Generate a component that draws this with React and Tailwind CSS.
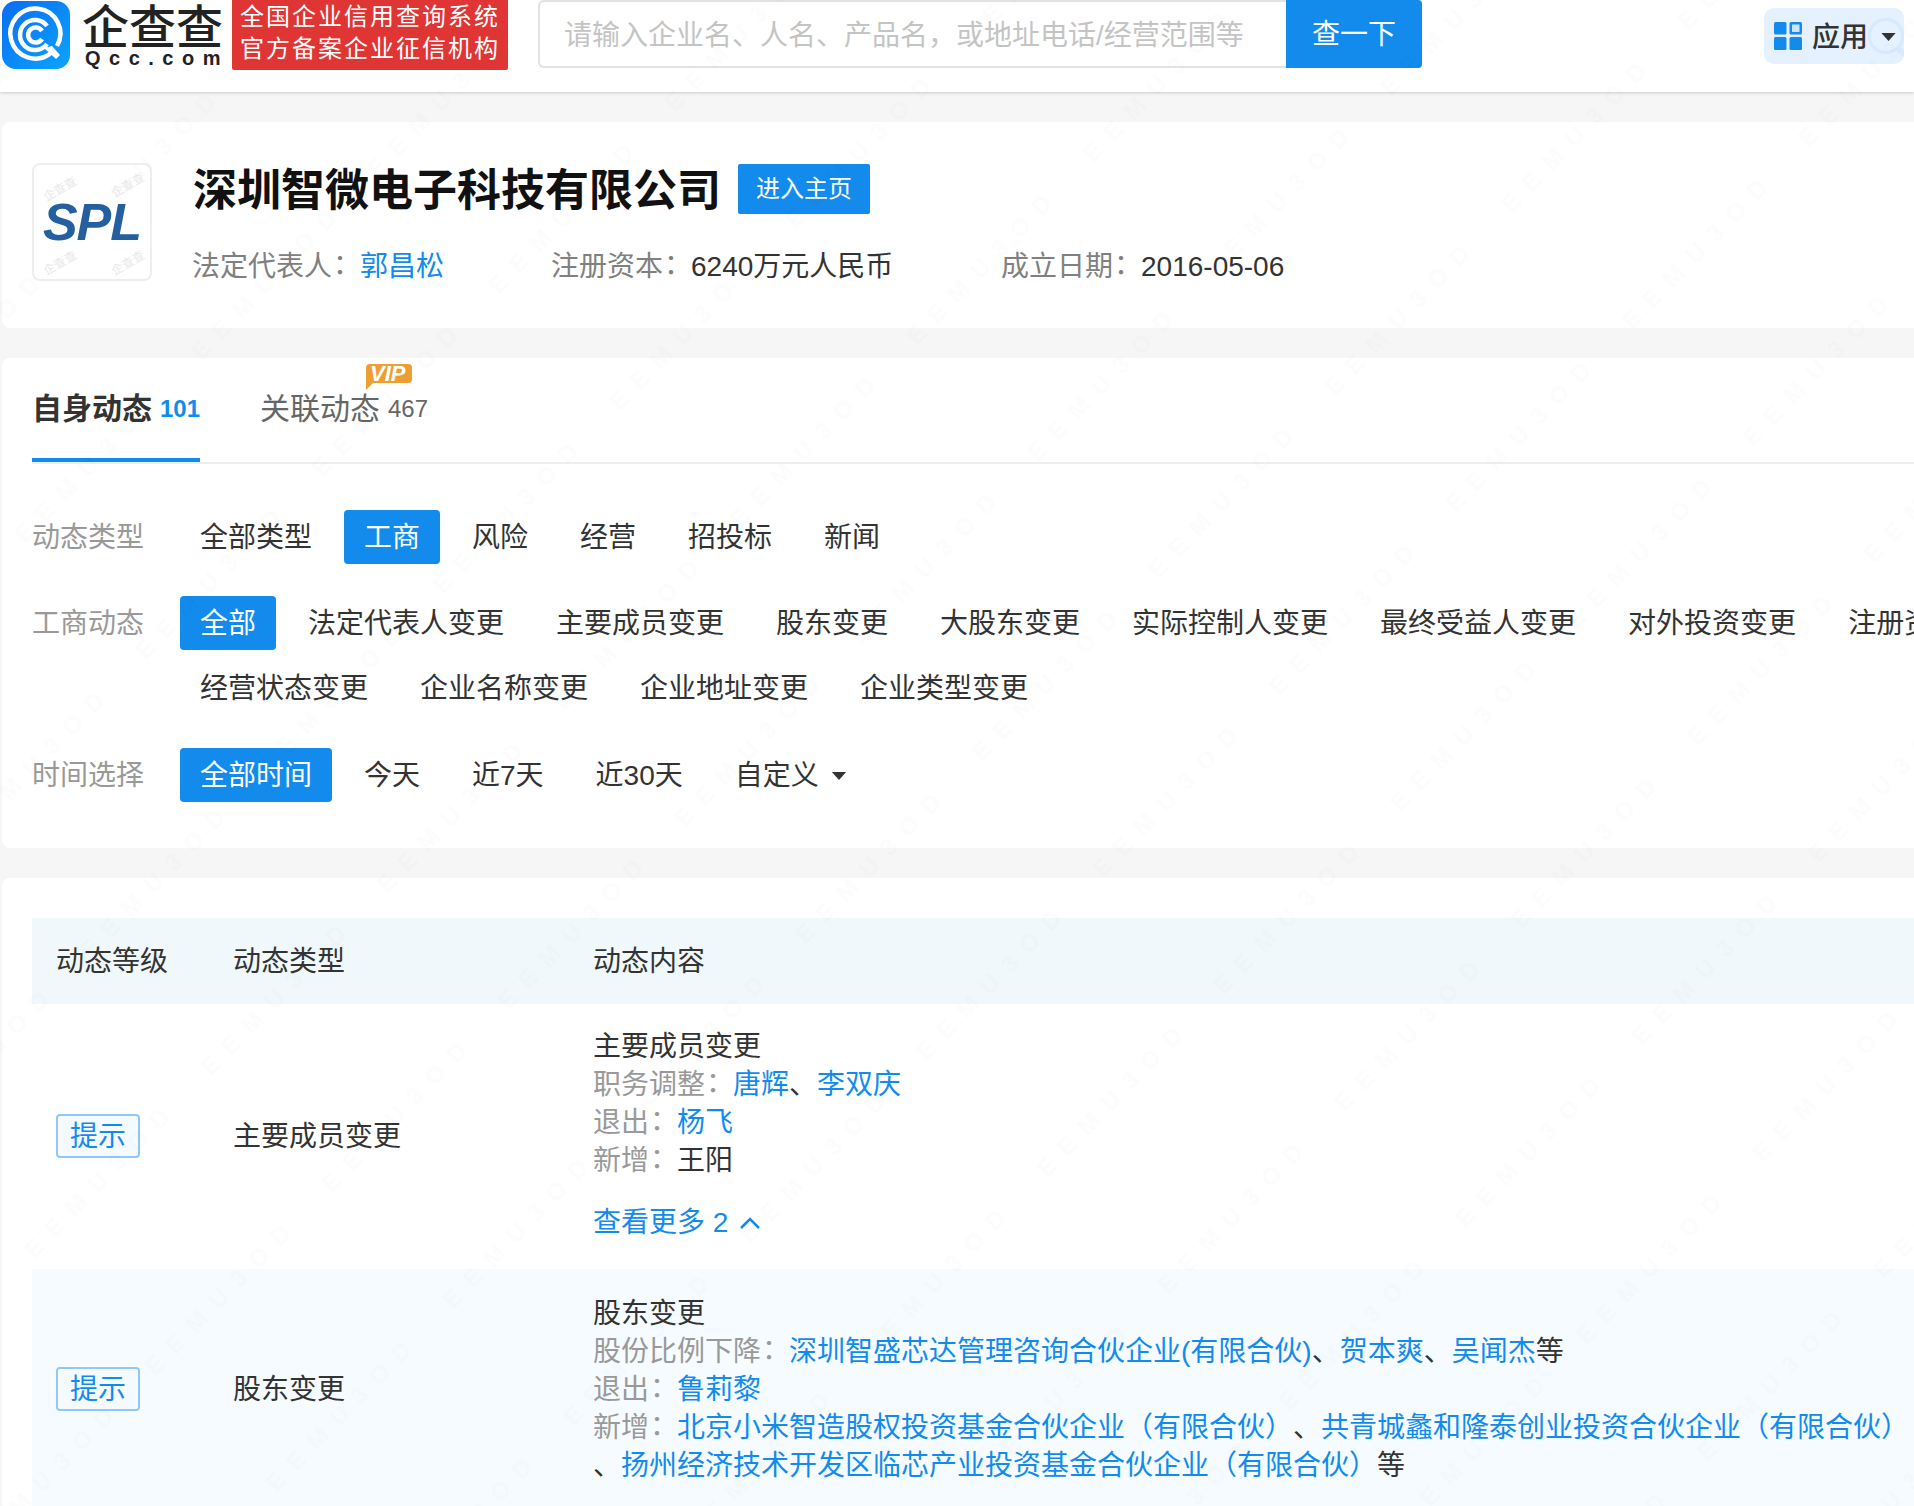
const typeTabs = ["全部类型", "工商", "风险", "经营", "招投标", "新闻"]
const bizTabs = [
  "全部",
  "法定代表人变更",
  "主要成员变更",
  "股东变更",
  "大股东变更",
  "实际控制人变更",
  "最终受益人变更",
  "对外投资变更",
  "注册资本变更",
  "经营状态变更",
  "企业名称变更",
  "企业地址变更",
  "企业类型变更",
]
const timeTabs = ["全部时间", "今天", "近7天", "近30天"]

function Caret({ className }) {
  return (
    <svg viewBox="0 0 16 9" className={className}>
      <path d="M0 0h16L8 9z" fill="currentColor" />
    </svg>
  )
}

function Chip({ active, children }) {
  return (
    <div
      className={`h-[54px] px-5 mr-3 rounded-[4px] leading-[56px] whitespace-nowrap ${
        active ? "bg-[#128bed] text-white" : "text-[#333]"
      }`}
    >
      {children}
    </div>
  )
}

function FilterRow({ label, children }) {
  return (
    <div className="flex">
      <div className="w-[148px] h-[54px] shrink-0 leading-[56px] text-[#999]">{label}</div>
      <div className="flex flex-wrap w-[1880px] gap-y-[11px]">{children}</div>
    </div>
  )
}

function Badge() {
  return (
    <div className="w-[84px] h-[44px] -mt-[2px] border-2 border-[#8fc9fb] rounded-[4px] bg-[#f5faff] text-[#128bed] text-center leading-[42px]">
      提示
    </div>
  )
}

function A({ children }) {
  return <span className="text-[#128bed]">{children}</span>
}

function G({ children }) {
  return <span className="text-[#999]">{children}</span>
}

// 冒号居中显示
function Colon() {
  return <span className="relative -left-[6px] leading-[0] [font-family:'Noto_Sans_CJK_TC',sans-serif]">：</span>
}

function QccLogo() {
  return (
    <svg viewBox="0 0 68 68" className="w-[68px] h-[68px] shrink-0 mt-px ml-[2px]">
      <defs>
        <linearGradient id="qcc" x1="0" y1="0" x2="1" y2="1">
          <stop offset="0" stopColor="#0a6cf5" />
          <stop offset="1" stopColor="#0aa5ff" />
        </linearGradient>
      </defs>
      <rect width="68" height="68" rx="14" fill="url(#qcc)" />
      <path d="M49 52A25 25 0 1 1 55 45" fill="none" stroke="#fff" strokeWidth="4.5" />
      <path d="M45 43A15 15 0 1 1 45 25" fill="none" stroke="#fff" strokeWidth="4.5" />
      <path d="M40 30A7.5 7.5 0 1 0 40 38" fill="none" stroke="#fff" strokeWidth="4.5" />
      <path d="M42 47l12 11 4-4-8-9z" fill="#fff" />
    </svg>
  )
}

function SplLogo() {
  return (
    <div className="relative w-[120px] h-[118px] shrink-0 border-2 border-[#eee] rounded-lg bg-white overflow-hidden flex items-center justify-center">
      <span className="[font-family:'Liberation_Sans',sans-serif] italic font-bold text-[52px] leading-none tracking-[-1px] text-[#24609f]">
        SPL
      </span>
      <span className="absolute left-2 top-4 -rotate-[30deg] text-[12px] leading-4 text-[#e8e8e8]">企查查</span>
      <span className="absolute right-1 top-3 -rotate-[30deg] text-[12px] leading-4 text-[#e8e8e8]">企查查</span>
      <span className="absolute left-2 bottom-2 -rotate-[30deg] text-[12px] leading-4 text-[#e8e8e8]">企查查</span>
      <span className="absolute right-1 bottom-2 -rotate-[30deg] text-[12px] leading-4 text-[#e8e8e8]">企查查</span>
    </div>
  )
}

// 页面水印
function Watermark() {
  return (
    <svg className="absolute inset-0 w-full h-full pointer-events-none">
      <defs>
        <pattern
          id="wm"
          patternUnits="userSpaceOnUse"
          width="254"
          height="168"
          patternTransform="translate(1041 1172) rotate(-46) translate(0 -21)"
        >
          <text x="0" y="30" fill="#000" fillOpacity="0.01" className="font-bold text-[24px] tracking-[13px]">
            EEMU3OD
          </text>
        </pattern>
      </defs>
      <rect width="100%" height="100%" fill="url(#wm)" />
    </svg>
  )
}

export default function App() {
  return (
    <div className="relative h-[1506px] overflow-hidden bg-[#f6f6f6] text-[28px] text-[#333] [font-family:'Liberation_Sans','Noto_Sans_CJK_SC',sans-serif]">
      {/* 顶部导航 */}
      <div className="flex h-[92px] bg-white shadow-[0_1px_3px_rgba(0,0,0,0.18)]">
        <QccLogo />
        <div className="w-[142px] ml-3 shrink-0 text-[#222]">
          <div className="text-[47px] leading-[40px] font-medium whitespace-nowrap mt-2">企查查</div>
          <div className="text-[20px] leading-[20px] font-bold tracking-[8.5px] whitespace-nowrap ml-[3px]">
            Qcc.com
          </div>
        </div>
        <div className="w-[276px] h-[70px] ml-2 shrink-0 bg-[#e03535] rounded-b-[2px] text-white text-[24px] leading-[32px] tracking-[2px] pl-2 pt-[1px] whitespace-nowrap">
          <div>全国企业信用查询系统</div>
          <div>官方备案企业征信机构</div>
        </div>
        <div className="flex h-[68px] ml-[30px] w-[884px] shrink-0">
          <div className="w-[748px] border-2 border-r-0 border-[#e2e2e2] rounded-l-[6px] pl-6 leading-[68px] text-[#c4c4c4] whitespace-nowrap">
            请输入企业名、人名、产品名，或地址电话/经营范围等
          </div>
          <div className="w-[136px] bg-[#128bed] rounded-r-[4px] text-white text-center leading-[70px]">查一下</div>
        </div>
        <div className="relative flex items-center w-[140px] h-[56px] mt-2 ml-[342px] shrink-0 bg-[#e6f1ff] rounded-[10px] overflow-hidden">
          <svg viewBox="0 0 60 60" className="absolute left-[102px] top-2 w-[50px] h-[50px]">
            <circle cx="24" cy="24" r="20" fill="none" stroke="#d9e9fd" strokeWidth="4" />
            <path d="M39 39l12 12" stroke="#d9e9fd" strokeWidth="7" strokeLinecap="round" />
          </svg>
          <svg viewBox="0 0 28 28" className="relative w-[28px] h-[28px] ml-[10px] shrink-0">
            <rect width="12.5" height="12.5" rx="1.5" fill="#128bed" />
            <rect x="15.5" y="0" width="12.5" height="12.5" rx="1.5" fill="#128bed" />
            <rect x="18" y="2.5" width="7.5" height="7.5" fill="#cfe3fa" />
            <rect y="15" width="12.5" height="13" rx="1.5" fill="#128bed" />
            <rect x="15.5" y="15" width="12.5" height="13" rx="1.5" fill="#128bed" />
          </svg>
          <span className="relative ml-[10px] mt-1 font-medium whitespace-nowrap">应用</span>
          <Caret className="relative w-[15px] h-[8px] ml-[13px] mt-[2px] text-[#333]" />
        </div>
      </div>

      <div className="w-[2200px] ml-[2px]">
        {/* 公司信息 */}
        <div className="flex h-[206px] mt-[30px] pl-[30px] pt-[41px] bg-white rounded-l-lg">
          <SplLogo />
          <div className="ml-[41px]">
            <div className="flex items-center h-[50px] mt-px">
              <h1 className="mt-1 text-[44px] font-bold text-[#111] whitespace-nowrap leading-[50px]">
                深圳智微电子科技有限公司
              </h1>
              <div className="w-[132px] h-[50px] ml-[17px] bg-[#128bed] rounded-[2px] text-white text-[24px] text-center leading-[49px]">
                进入主页
              </div>
            </div>
            <div className="flex mt-[33px] -ml-px leading-[40px] whitespace-nowrap">
              <div className="w-[359px]">
                <span className="text-[#808080]">
                  法定代表人
                  <Colon />
                </span>
                <A>郭昌松</A>
              </div>
              <div className="w-[450px]">
                <span className="text-[#808080]">
                  注册资本
                  <Colon />
                </span>
                6240万元人民币
              </div>
              <div>
                <span className="text-[#808080]">
                  成立日期
                  <Colon />
                </span>
                2016-05-06
              </div>
            </div>
          </div>
        </div>

        {/* 筛选 */}
        <div className="h-[490px] mt-[30px] pl-[30px] bg-white rounded-l-lg">
          <div className="relative flex h-[106px] border-b-2 border-[#eee]">
            <div className="flex w-[168px] h-[104px] border-b-4 border-[#128bed] pt-[30px] leading-[42px] whitespace-nowrap">
              <span className="text-[30px] font-bold">自身动态</span>
              <span className="ml-2 text-[24px] font-bold text-[#128bed]">101</span>
            </div>
            <div className="flex ml-[60px] pt-[30px] leading-[42px] whitespace-nowrap text-[#666]">
              <span className="text-[30px]">关联动态</span>
              <span className="ml-2 text-[24px]">467</span>
            </div>
            <div className="absolute left-[332px] top-[6px]">
              <svg viewBox="0 0 48 26" className="w-[48px] h-[26px]">
                <path
                  d="M6 0h38a4 4 0 0 1 4 4v11a4 4 0 0 1-4 4H9l-7 7V4a4 4 0 0 1 4-4z"
                  fill="#ee9f33"
                />
              </svg>
              <span className="absolute left-[6px] top-0 [font-family:'Liberation_Sans',sans-serif] italic font-bold text-[22px] leading-[19px] text-white">
                VIP
              </span>
            </div>
          </div>
          <div className="flex flex-col gap-8 pt-[46px]">
            <FilterRow label="动态类型">
              {typeTabs.map((t) => (
                <Chip key={t} active={t === "工商"}>
                  {t}
                </Chip>
              ))}
            </FilterRow>
            <FilterRow label="工商动态">
              {bizTabs.map((t, i) => (
                <Chip key={t} active={i === 0}>
                  {t}
                </Chip>
              ))}
            </FilterRow>
            <div className="mt-px">
              <FilterRow label="时间选择">
                {timeTabs.map((t, i) => (
                  <Chip key={t} active={i === 0}>
                    {t}
                  </Chip>
                ))}
                <div className="flex items-center h-[54px] pt-[2px] px-5 text-[#333]">
                  自定义
                  <Caret className="w-[16px] h-[8px] ml-3" />
                </div>
              </FilterRow>
            </div>
          </div>
        </div>

        {/* 动态列表 */}
        <div className="mt-[30px] pl-[30px] pt-[40px] bg-white rounded-l-lg">
          <div className="grid grid-cols-[177px_360px_1fr] h-[86px] pt-[2px] items-center bg-[#f0f8fc] leading-[38px]">
            <div className="pl-6">动态等级</div>
            <div className="pl-6">动态类型</div>
            <div className="pl-6">动态内容</div>
          </div>

          <div className="grid grid-cols-[177px_360px_1fr] h-[265px] items-center leading-[38px]">
            <div className="pl-6">
              <Badge />
            </div>
            <div className="pl-6">主要成员变更</div>
            <div className="pl-6 -mt-[3px]">
              <div>主要成员变更</div>
              <div>
                <G>
                  职务调整
                  <Colon />
                </G>
                <A>唐辉</A>、<A>李双庆</A>
              </div>
              <div>
                <G>
                  退出
                  <Colon />
                </G>
                <A>杨飞</A>
              </div>
              <div>
                <G>
                  新增
                  <Colon />
                </G>
                王阳
              </div>
              <div className="flex items-center mt-6 text-[#128bed]">
                查看更多 2
                <svg viewBox="0 0 20 12" className="w-[20px] h-[12px] ml-3">
                  <path d="M1 11l9-9 9 9" fill="none" stroke="currentColor" strokeWidth="2.5" />
                </svg>
              </div>
            </div>
          </div>

          <div className="grid grid-cols-[177px_360px_1fr] h-[242px] items-center bg-[#f6fbff] leading-[38px]">
            <div className="pl-6">
              <Badge />
            </div>
            <div className="pl-6">股东变更</div>
            <div className="pl-6 whitespace-nowrap">
              <div>股东变更</div>
              <div>
                <G>
                  股份比例下降
                  <Colon />
                </G>
                <A>深圳智盛芯达管理咨询合伙企业(有限合伙)</A>、<A>贺本爽</A>、<A>吴闻杰</A>等
              </div>
              <div>
                <G>
                  退出
                  <Colon />
                </G>
                <A>鲁莉黎</A>
              </div>
              <div>
                <G>
                  新增
                  <Colon />
                </G>
                <A>北京小米智造股权投资基金合伙企业（有限合伙）</A>
                <span className="ml-[14px]">、</span>
                <A>共青城蠡和隆泰创业投资合伙企业（有限合伙）</A>
                <br />、<A>扬州经济技术开发区临芯产业投资基金合伙企业（有限合伙）</A>等
              </div>
            </div>
          </div>
        </div>
      </div>

      <Watermark />
    </div>
  )
}
